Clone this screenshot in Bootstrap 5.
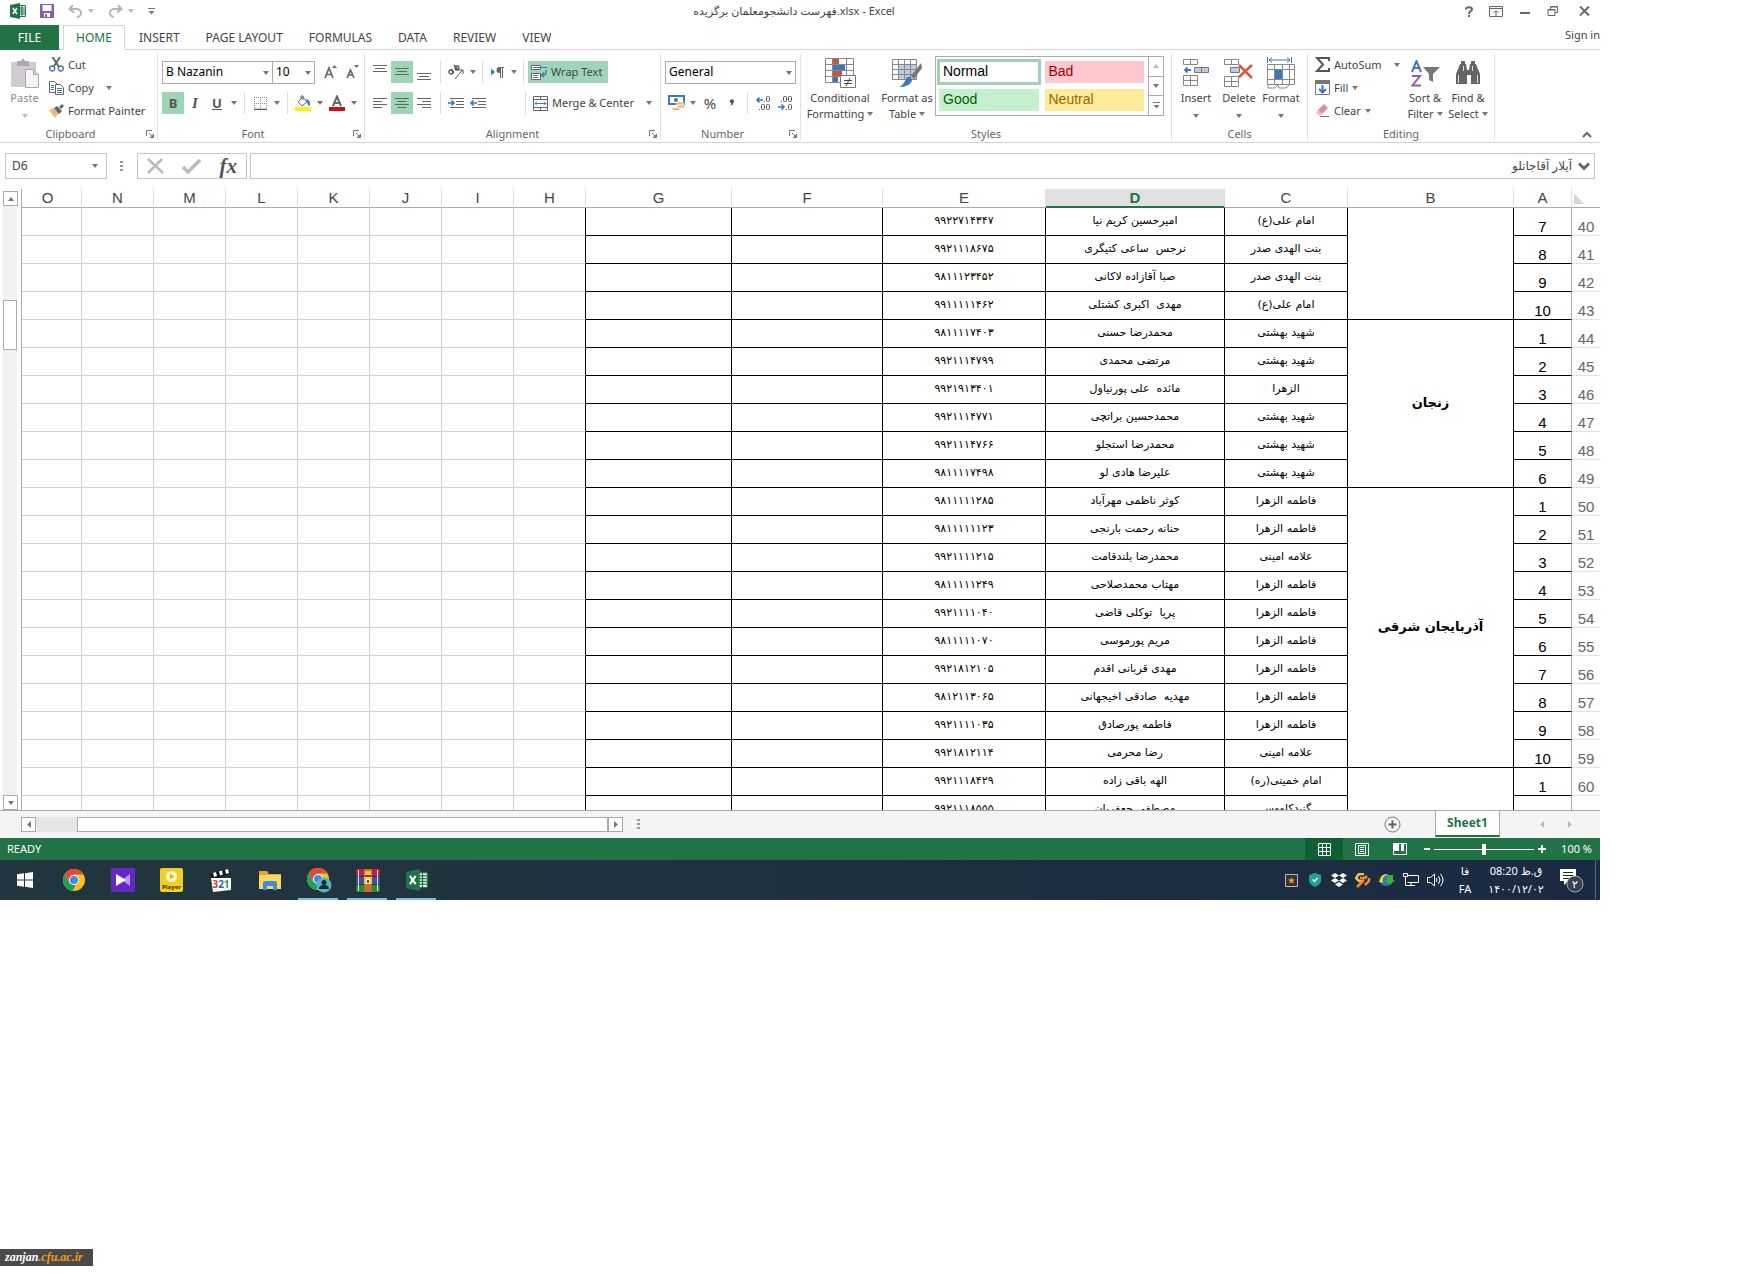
<!DOCTYPE html>
<html lang="en">
<head>
<meta charset="utf-8">
<meta name="viewport" content="width=device-width, initial-scale=1">
<title>Excel</title>
<link href="https://cdn.jsdelivr.net/npm/bootstrap@5.3.0/dist/css/bootstrap.min.css" rel="stylesheet">
<style>
:root{--ink:#444;--line:#d4d4d4;--green:#217346;--on:#9fd5b7}
body{font-family:"Noto Sans","DejaVu Sans",sans-serif;font-size:11px;line-height:16px;color:var(--ink);background:#fff;min-height:100vh}
.app{width:100%;max-width:1600px}
button,select,input{font:inherit;color:inherit;border-radius:0}
.xb{border:0;background:none;padding:0;display:inline-flex;align-items:center;justify-content:center;white-space:nowrap;flex:none}
svg{display:block;flex:none}
.ct{width:0;height:0;border:3px solid transparent;border-top:4px solid #777;border-bottom:0;flex:none}
.ct.up{border-top:0;border-bottom:4px solid #777}
.ct.pale{border-top-color:#bbb}
/* title bar and tabs */
.titlebar{height:25px;padding:0 6px 3px 10px}
.title-text{margin-right:32px}
.q5{margin-left:5px}.q14{margin-left:14px}
.tabs{height:25px;border-bottom:1px solid var(--line)}
.tabs .xb{height:25px;font-size:12px;padding:0 13px}
.tabs .file-tab{background:var(--green);color:#fff;width:59px}
.tabs .home-tab{border:1px solid var(--line);border-bottom-color:#fff;color:var(--green);width:62px;padding:0;margin:0 1px 0 4px}
.signin{padding-top:2px}
/* ribbon */
.ribbon{height:93px;border-bottom:1px solid var(--line);padding-top:4px}
.grp{height:86px;border-right:1px solid #e1e1e1;display:flex;flex-direction:column;flex:none}
.grp-body{height:74px;display:flex}
.grp-name{height:12px;line-height:12px;color:#666;position:relative;text-align:center}
.launch{position:absolute;right:3px;top:2px}
.g1{width:158px}.g2{width:207px}.g3{width:296px}.g4{width:140px}.g5{width:371px}.g6{width:136px}.g7{width:187px}
.two{display:flex;flex-direction:column;gap:9px;padding:7px 0 0 4px;flex:1}
.line{display:flex;height:22px;align-items:center}
.three .xb{height:23px;justify-content:flex-start;gap:4px;padding-bottom:2px}
.ib{width:22px;height:22px}
.cb{width:12px;height:22px}
.on{background:var(--on)}
.vr1{width:1px;height:22px;background:#ddd;flex:none}
.pick{position:relative;display:flex}
.pick select{appearance:none;border:1px solid #ababab;background:#fff;height:23px;padding:0 3px;color:#000;font-size:12px;width:100%}
.pick .ct{position:absolute;right:4px;top:10px}
.w-font{width:111px}.w-size{width:43px;margin-left:-1px}.w-num{width:131px}
.big{flex-direction:column;justify-content:flex-start;padding-top:2px;line-height:16px}
.big .pic{height:34px;display:flex;align-items:center}
.big .cap2{display:flex;align-items:center;gap:3px}
.glyph{font-size:13px;font-weight:700;line-height:22px;color:#555}
.glyph.reg{font-weight:400;font-size:15px;color:#444}
.glyph.fst-italic{font-family:"Liberation Serif",serif;font-size:15px}
.wrapb{height:22px;gap:4px;padding:0 6px 0 3px}
.s3{margin-left:3px}.s4{margin-left:4px}.s5{margin-left:5px}.s6{margin-left:36px}
.b-paste{width:49px}.b-cond{width:78px}.b-tbl{width:56px}
.b-ins{width:48px}.b-del{width:38px}.b-fmt{width:46px}
.b-ed{width:92px;padding-left:7px}.b-sort{width:50px}.b-find{width:36px}
.gallery{border:1px solid #ababab;width:229px;height:60px;margin-top:2px;display:flex}
.gal-grid{display:grid;grid-template-columns:1fr 1fr;gap:6px;padding:4px 4px 4px 3px;flex:1}
.gal-grid .xb{font:14px/20px "Liberation Sans",Arial,sans-serif;justify-content:flex-start;padding:0 0 2px 4px}
.gal-grid .sel{outline:3px solid #9fd0b9;color:#000;outline-offset:-1px}
.gal-grid .bad{background:#ffc7ce;color:#9c0006}
.gal-grid .good{background:#c6efce;color:#006100}
.gal-grid .neu{background:#ffeb9c;color:#9c6500}
.gal-scroll{width:15px;border-left:1px solid #ababab;display:flex;flex-direction:column}
.gal-scroll .xb{flex:1 1 0;flex-direction:column;gap:2px}
.gal-scroll .xb+.xb{border-top:1px solid #ababab}
/* formula bar */
.fbar{height:46px;padding:10px 5px 10px}
.fbox{border:1px solid #c6c6c6;height:26px;display:flex;align-items:center;background:#fff}
.fbox input{border:0;outline:0;background:none;min-width:0;padding:0 6px;font-size:12px}
.name-box{width:102px}.fx-box{width:110px;margin-right:3px}
.fx{font:italic bold 21px/22px "Liberation Serif",serif;color:#555}
.dots{width:3px;height:11px;background:repeating-linear-gradient(#999 0 2px,transparent 2px 4px);flex:none}
.dots.mid{margin:0 14px 0 13px}
/* grid */
.sheet-view{height:621px;overflow:hidden}
.vscroll{width:22px;padding:2px 4px 0 3px;display:flex;flex-direction:column;border-right:1px solid #ababab;flex:none}
.vtrack{background:#f1f1f1;flex:1;padding-top:94px}
.sb{width:15px;height:15px;border:1px solid #ababab;background:#fff}
.vthumb{height:50px;border:1px solid #ababab;background:#fff}
.grid-tbl{table-layout:fixed;border-collapse:separate;border-spacing:0;width:100%;font-family:"Liberation Sans",Arial,sans-serif;font-size:15px;line-height:16px;text-align:center}
.grid-tbl th{font-weight:400;padding:0;height:19px;border-right:1px solid #ddd;border-bottom:1px solid #ababab;line-height:16px;color:#444}
.grid-tbl thead th:last-child{border-right:0}
.grid-tbl thead .act{background:#e1e1e1;color:var(--green);font-weight:700;border-bottom:2px solid var(--green)}
.grid-tbl td,.grid-tbl tbody th{height:28px;padding:0;border-right:1px solid #d0d0d0;border-bottom:1px solid #d0d0d0;white-space:pre;overflow:hidden}
.grid-tbl td.k{border-color:#000;color:#000}
.grid-tbl td.h{border-right-color:#000}
.grid-tbl td.fa{font:11px/18px "DejaVu Sans",sans-serif;padding-bottom:2px}
.grid-tbl td.prov{font:bold 13px/20px "DejaVu Sans",sans-serif;padding-bottom:2px}
.grid-tbl td.idx{vertical-align:bottom;border-right-color:#ababab}
.grid-tbl tbody th{border-right:0;vertical-align:bottom;color:#666;border-color:#e1e1e1}
.c-o{width:60px}.c-n{width:72px}.c-g{width:146px}.c-f{width:151px}.c-e{width:163px}.c-d{width:179px}.c-c{width:123px}.c-b{width:166px}.c-a{width:58px}
/* sheet tabs, status bar */
.sheetbar{height:28px;background:#f4f4f4;border-top:1px solid #ababab;padding-left:21px}
.hthumb{width:531px;height:15px;border:1px solid #ababab;background:#fff;margin-left:41px}
.htrack{background:#e6e6e6}
.sheet-tab{width:65px;height:26px;margin-top:-1px;background:#fff;border:1px solid #ababab;border-top:0;border-bottom:2px solid var(--green);color:var(--green);font-weight:700;font-size:12px}
.add-sheet{margin-right:34px}
.arrows{gap:24px;margin:0 28px 0 40px}
.status{height:22px;background:var(--green);color:#fff;padding-left:7px}
.view-b{width:38px;height:22px}
.view-b.cur{background:#0f5f33}
.zoomer{appearance:none;width:100px;height:22px;background:linear-gradient(#fff,#fff) center/100% 1px no-repeat;margin:0 4px 0 3px}
.zoomer::-webkit-slider-thumb{appearance:none;width:4px;height:11px;background:#fff;border-radius:0}
.pct{width:54px;text-align:right;padding-right:8px}
/* taskbar */
.taskbar{height:40px;background:linear-gradient(90deg,#22363f,#20323f 40%,#1a2a42);color:#fff}
.task{width:49px;height:40px;position:relative}
.task.run::after{content:"";position:absolute;left:4px;right:5px;bottom:0;height:2px;background:#83b9e3}
.tray{width:24px;height:40px}
.clock{line-height:18px;text-align:center}
.w-lang{width:36px}.w-clock{width:66px}.w-note{width:46px}
.desk{height:40px;background:#55637a;margin-right:4px}
.mark-url{background:#4a4a4a;color:#fff;font:italic bold 12px/17px "Liberation Serif",serif;width:93px;padding-left:5px;margin-bottom:9px;text-decoration:none}
.mark-url span{color:#f39a1c}
</style>
</head>
<body class="d-flex flex-column">
<svg width="0" height="0" class="position-absolute" aria-hidden="true"><defs>
<symbol id="xl" viewBox="0 0 16 16"><path fill="#fff" stroke="#217346" d="M8 2.500h7.500v11H8z"/><path stroke="#217346" fill="none" d="M8 5h7M8 7h7M8 9h7M8 11h7M12 3v10"/><path fill="#217346" d="M0 2 10 0v16L0 14z"/><path stroke="#fff" stroke-width="1.500" d="m2.800 5 4.200 6M7 5l-4.200 6"/></symbol>
<symbol id="launch" viewBox="0 0 8 8"><path d="M.5 6V.5H6M3 3l3 3M7.500 4v3.500H4" fill="none" stroke="#777"/><path fill="#777" d="M7.500 4v3.500H4z"/></symbol>
<symbol id="chrome" viewBox="0 0 24 24"><circle cx="12" cy="12" r="11" fill="#fbc116"/><path fill="#dd4b3e" d="M2.500 6.500A11 11 0 0 1 21.500 6.500H12L7.500 14.500z"/><path fill="#1da05b" d="M2.500 6.500 7.500 15l6 2L10.500 22.900A11 11 0 0 1 2.500 6.500z"/><circle cx="12" cy="12" r="5" fill="#fff"/><circle cx="12" cy="12" r="4" fill="#4a86e8"/></symbol>
</defs></svg>
<main class="app">
<header class="titlebar d-flex align-items-center">
  <div class="d-flex align-items-center flex-fill">
    <svg width="16" height="16"><use href="#xl"/></svg>
    <button class="xb q14" aria-label="Save"><svg width="14" height="14" viewBox="0 0 14 14"><path fill="#8a5fa8" d="M0 0h14v14H0z"/><path fill="#fff" d="M2.500 1h9v6h-9zM4 9h6v4H4z"/><path fill="#8a5fa8" d="M5 10h2v3H5z"/></svg></button>
    <button class="xb q14" aria-label="Undo"><svg width="15" height="13" viewBox="0 0 15 13"><path fill="none" stroke="#b5b5b5" stroke-width="2" d="M5 0 1.500 4 6 7.500M2 4h7a4 4 0 0 1 0 8"/></svg></button><i class="ct pale q5"></i>
    <button class="xb q14" aria-label="Redo"><svg width="15" height="13" viewBox="0 0 15 13"><path fill="none" stroke="#b5b5b5" stroke-width="2" d="M10 0l3.500 4L9 7.500M13 4H6a4 4 0 0 0 0 8"/></svg></button><i class="ct pale q5"></i>
    <button class="xb q14" aria-label="Customize"><svg width="7" height="7" viewBox="0 0 7 7"><path fill="#777" d="M0 0h7v1H0zM.5 3h6L3.500 6.500z"/></svg></button>
  </div>
  <div class="title-text" dir="ltr"><bdi>فهرست دانشجومعلمان برگزیده</bdi>.xlsx - Excel</div>
  <div class="d-flex align-items-center justify-content-end flex-fill gap-3">
    <button class="xb" aria-label="Help"><svg width="8" height="11" viewBox="0 0 8 11"><path fill="none" stroke="#666" stroke-width="2" d="M1 3.500C1 .5 7 .5 7 3.500 7 5 4 5 4 8M4 9v2"/></svg></button>
    <button class="xb" aria-label="Ribbon display"><svg width="14" height="11" viewBox="0 0 14 11"><path fill="none" stroke="#666" d="M.5.5h13v10H.5zM.5 2.500h13M7 10V5M4.500 7 7 4.500 9.500 7"/></svg></button>
    <button class="xb" aria-label="Minimize"><svg width="12" height="10" viewBox="0 0 12 10"><path fill="#666" d="M1 6h10v2H1z"/></svg></button>
    <button class="xb" aria-label="Restore"><svg width="12" height="10" viewBox="0 0 12 10"><path fill="none" stroke="#666" d="M3.500 3V.5h7v6H8M1 3.500h7v6H1zM1 4h7M3.500 1h7"/></svg></button>
    <button class="xb mx-1" aria-label="Close"><svg width="11" height="10" viewBox="0 0 11 10"><path stroke="#666" stroke-width="2" d="m1 .5 9 9M10 .5l-9 9"/></svg></button>
  </div>
</header>
<nav class="tabs d-flex">
  <button class="xb file-tab">FILE</button><button class="xb home-tab">HOME</button><button class="xb">INSERT</button><button class="xb">PAGE LAYOUT</button><button class="xb">FORMULAS</button><button class="xb">DATA</button><button class="xb">REVIEW</button><button class="xb">VIEW</button>
  <a href="#" class="signin ms-auto text-reset text-decoration-none">Sign in</a>
</nav>
<section class="ribbon d-flex">
  <div class="grp g1"><div class="grp-body">
    <button class="xb big b-paste text-black-50"><span class="pic"><svg width="30" height="31" viewBox="0 0 30 31"><path fill="#cfcbd0" d="M1 4h25v25H1z"/><path fill="#aaa" d="M7 3h4q2-5 4 0h4v5H7z"/><path fill="#f6f3f7" stroke="#aaa" d="M15.500 11.500h8l5 5v13h-13zM23.500 11.500v5h5"/></svg></span><span>Paste</span><i class="ct pale mt-2"></i></button>
    <div class="three d-flex flex-column">
      <button class="xb"><svg width="15" height="15" viewBox="0 0 15 15"><path stroke="#666" stroke-width="2" fill="none" d="M3.500 0 10 10M11 0 4.500 10"/><g fill="none" stroke="#3f78b5" stroke-width="1.300"><circle cx="3.200" cy="11.500" r="2.500"/><circle cx="11.800" cy="11.500" r="2.500"/></g></svg>Cut</button>
      <button class="xb"><svg width="15" height="14" viewBox="0 0 15 14"><g fill="#fff" stroke="#666"><path d="M.5.5h5l3 3v8h-8z"/><path d="M6.500 3.500h5l3 3v7h-8z"/></g><path stroke="#3f78b5" d="M2 4.500h3M2 6.500h3M2 8.500h3M8 7.500h5M8 9.500h5M8 11.500h5"/></svg>Copy<i class="ct ms-2"></i></button>
      <button class="xb"><svg width="15" height="14" viewBox="0 0 15 14"><path fill="#e3bd7b" d="M0 6 5 4l5 5-4 5z"/><path fill="#666" d="m5 4 3-2 5 5-3 3zM10 3l3-3 2 2-3 3z"/></svg>Format Painter</button>
    </div></div>
    <div class="grp-name pe-3">Clipboard<button class="xb launch" aria-label="Clipboard settings"><svg width="8" height="8"><use href="#launch"/></svg></button></div></div>
  <div class="grp g2"><div class="grp-body two">
    <div class="line"><label class="pick w-font"><select aria-label="Font"><option>B Nazanin</option></select><i class="ct"></i></label><label class="pick w-size"><select aria-label="Font size"><option>10</option></select><i class="ct"></i></label>
      <button class="xb ib ms-1" aria-label="Increase font"><svg width="13" height="14" viewBox="0 0 13 14"><path fill="none" stroke="#666" stroke-width="1.700" d="m1 13 4-10 4 10M2.500 9.500h5"/><path fill="#3f78b5" d="M8 3h5l-2.500-3z"/></svg></button><button class="xb ib" aria-label="Decrease font"><svg width="13" height="14" viewBox="0 0 13 14"><path fill="none" stroke="#666" stroke-width="1.700" d="m1 13 3.500-8L8 13M2.500 10h4"/><path fill="#3f78b5" d="M8 0h5l-2.500 3z"/></svg></button></div>
    <div class="line"><button class="xb ib on glyph" aria-label="Bold">B</button><button class="xb ib glyph fst-italic" aria-label="Italic">I</button><button class="xb ib glyph text-decoration-underline" aria-label="Underline">U</button><button class="xb cb" aria-label="Underline options"><i class="ct"></i></button><i class="vr1 ms-1"></i>
      <button class="xb ib ms-1" aria-label="Borders"><svg width="13" height="13" viewBox="0 0 13 13"><path fill="none" stroke="#888" stroke-dasharray="1 1" d="M.5 0v13M6.500 0v13M12.500 0v13M0 .5h13M0 6.500h13"/><path stroke="#555" stroke-width="1.500" d="M0 12.500h13"/></svg></button><button class="xb cb" aria-label="Border options"><i class="ct"></i></button><i class="vr1 ms-1"></i>
      <button class="xb ib ms-1" aria-label="Fill colour"><svg width="16" height="16" viewBox="0 0 16 16"><path fill="#fff" stroke="#666" d="m3 7 5-5 4 5-5 4zM6 4V1h2v4"/><path fill="#3f78b5" d="M11 4q5 1 4 7l-2-1z"/><path fill="#ffee12" d="M0 12h16v4H0z"/></svg></button><button class="xb cb" aria-label="Fill options"><i class="ct"></i></button>
      <button class="xb ib" aria-label="Font colour"><svg width="16" height="16" viewBox="0 0 16 16"><path fill="none" stroke="#666" stroke-width="2" d="M4 11 8 1.500 12 11M5.500 8h5"/><path fill="#cf1111" d="M0 12h16v4H0z"/></svg></button><button class="xb cb" aria-label="Font colour options"><i class="ct"></i></button></div>
    </div><div class="grp-name pe-3">Font<button class="xb launch" aria-label="Font settings"><svg width="8" height="8"><use href="#launch"/></svg></button></div></div>
  <div class="grp g3"><div class="grp-body two">
    <div class="line"><button class="xb ib" aria-label="Top"><svg width="14" height="16" viewBox="0 0 14 16"><path stroke="#666" d="M0 1.500h14M2 4.500h10M0 7.500h14"/></svg></button><button class="xb ib on" aria-label="Middle"><svg width="14" height="16" viewBox="0 0 14 16"><path stroke="#666" d="M0 4.500h14M2 7.500h10M0 10.500h14"/></svg></button><button class="xb ib" aria-label="Bottom"><svg width="14" height="16" viewBox="0 0 14 16"><path stroke="#666" d="M0 9.500h14M2 12.500h10M0 15.500h14"/></svg></button><i class="vr1 s5"></i>
      <button class="xb ib ms-1" aria-label="Orientation"><svg width="16" height="16" viewBox="0 0 16 16"><path fill="none" stroke="#555" d="M7 15 14.500 6M11 6h4v4"/><g fill="none" stroke="#555" stroke-width="1.300"><circle cx="3" cy="8" r="2"/><path d="m3 5 3 4M6 1l4 5"/><circle cx="9" cy="4" r="2"/></g></svg></button><button class="xb cb" aria-label="Orientation options"><i class="ct"></i></button><i class="vr1 s3"></i>
      <button class="xb ib s3" aria-label="Direction"><svg width="13" height="11" viewBox="0 0 13 11"><path fill="#3f78b5" d="M0 1.500v7L4 5z"/><path fill="#666" d="M8 0h5v1h-1v10h-1V1h-1v10H9V6Q5 6 5.500 3 6 0 8 0z"/></svg></button><button class="xb cb" aria-label="Direction options"><i class="ct"></i></button><i class="vr1 s3"></i>
      <button class="xb on wrapb s4"><svg width="16" height="16" viewBox="0 0 16 16"><path fill="#fff" stroke="#666" d="M.5 1.500h9v4h-9zM.5 9.500h9v6h-9z"/><path stroke="#3f78b5" d="M2 3.500h14M2 11.500h5M2 13.500h5"/><path fill="none" stroke="#3f78b5" stroke-width="1.500" d="M15 6v3q0 2-4 2M13 8.500 10.500 11l2.500 2"/></svg>Wrap Text</button></div>
    <div class="line"><button class="xb ib" aria-label="Left"><svg width="14" height="11" viewBox="0 0 14 11"><path stroke="#666" d="M0 .5h14M0 3.500h9M0 6.500h14M0 9.500h9"/></svg></button><button class="xb ib on" aria-label="Centre"><svg width="14" height="11" viewBox="0 0 14 11"><path stroke="#666" d="M0 .5h14M2.500 3.500h9M0 6.500h14M2.500 9.500h9"/></svg></button><button class="xb ib" aria-label="Right"><svg width="14" height="11" viewBox="0 0 14 11"><path stroke="#666" d="M0 .5h14M5 3.500h9M0 6.500h14M5 9.500h9"/></svg></button><i class="vr1 s5"></i>
      <button class="xb ib ms-1" aria-label="Decrease indent"><svg width="16" height="11" viewBox="0 0 16 11"><path stroke="#666" d="M2 .5h14M8 3.500h8M8 6.500h8M2 9.500h14"/><path stroke="#3f78b5" stroke-width="1.600" fill="none" d="M0 5h6M3.500 2.500 6 5 3.500 7.500"/></svg></button><button class="xb ib" aria-label="Increase indent"><svg width="16" height="11" viewBox="0 0 16 11"><path stroke="#666" d="M2 .5h14M8 3.500h8M8 6.500h8M2 9.500h14"/><path stroke="#3f78b5" stroke-width="1.600" fill="none" d="M7 5H1M3.500 2.500 1 5l2.500 2.500"/></svg></button><i class="vr1 s6"></i>
      <button class="xb wrapb s4"><svg width="15" height="15" viewBox="0 0 15 15"><path fill="#fff" stroke="#666" d="M.5.5h14v14H.5zM.5 3.500h14M.5 11.500h14M7.500.5v3M7.500 11.500v3"/><path stroke="#3f78b5" fill="none" d="M2 7.500h11M4 5.500l-2 2 2 2M11 5.500l2 2-2 2"/></svg>Merge &amp; Center<i class="ct ms-2"></i></button></div>
    </div><div class="grp-name">Alignment<button class="xb launch" aria-label="Alignment settings"><svg width="8" height="8"><use href="#launch"/></svg></button></div></div>
  <div class="grp g4"><div class="grp-body two">
    <div class="line"><label class="pick w-num"><select aria-label="Number format"><option>General</option></select><i class="ct"></i></label></div>
    <div class="line"><button class="xb ib" aria-label="Accounting"><svg width="17" height="16" viewBox="0 0 17 16"><path fill="#fff" stroke="#3f78b5" stroke-width="2" d="M1 1h15v8H1z"/><circle cx="8" cy="5" r="2" fill="#3f78b5"/><g fill="#e6c083" stroke="#fff" stroke-width=".6"><rect x="8" y="7" width="8" height="3" rx="1.500"/><rect x="9" y="10" width="8" height="3" rx="1.500"/><rect x="4" y="12.500" width="8" height="3" rx="1.500"/></g></svg></button><button class="xb cb" aria-label="Accounting options"><i class="ct"></i></button>
      <button class="xb ib glyph reg" aria-label="Percent">%</button><button class="xb ib" aria-label="Comma"><svg width="6" height="8" viewBox="0 0 6 8"><path fill="#555" d="M1 1q4-2 4 2-1 3-4 4 2-2 1-3-2-1-1-3z"/></svg></button><i class="vr1 ms-1"></i>
      <button class="xb ib ms-1" aria-label="Increase decimal"><svg width="15" height="14" viewBox="0 0 15 14"><path stroke="#3f78b5" stroke-width="1.600" fill="none" d="M7 4H1M3.500 1.500 1 4l2.500 2.500"/><g fill="none" stroke="#555"><rect x="10.500" y=".5" width="3" height="5" rx="1"/><rect x="5.500" y="8.500" width="3" height="5" rx="1"/><rect x="10.500" y="8.500" width="3" height="5" rx="1"/></g><path fill="#555" d="M8 5h1v1H8zM3 13h1v1H3z"/></svg></button><button class="xb ib" aria-label="Decrease decimal"><svg width="15" height="14" viewBox="0 0 15 14"><path stroke="#3f78b5" stroke-width="1.600" fill="none" d="M0 11h6M3.500 8.500 6 11l-2.500 2.500"/><g fill="none" stroke="#555"><rect x="10.500" y=".5" width="3" height="5" rx="1"/><rect x="5.500" y=".5" width="3" height="5" rx="1"/><rect x="10.500" y="8.500" width="3" height="5" rx="1"/></g><path fill="#555" d="M3 5h1v1H3zM8 13h1v1H8z"/></svg></button></div>
    </div><div class="grp-name pe-3">Number<button class="xb launch" aria-label="Number settings"><svg width="8" height="8"><use href="#launch"/></svg></button></div></div>
  <div class="grp g5"><div class="grp-body">
    <button class="xb big b-cond"><span class="pic"><svg width="31" height="31" viewBox="0 0 31 31"><path fill="#fff" stroke="#888" d="M.5.5h28v24H.5zM.5 6.500h28M.5 12.500h28M.5 18.500h28M7.500.5v24M21.500.5v24"/><path fill="#c7583f" d="M8 1h6v5H8zM8 13h9v5H8z"/><path fill="#3f78b5" d="M8 7h12v5H8zM8 19h5v5H8z"/><path fill="#fff" stroke="#777" d="M15.500 17.500h15v12h-15z"/><path stroke="#444" d="M19 22.500h8M19 25.500h8M25 20l-4 8"/></svg></span><span>Conditional</span><span class="cap2">Formatting<i class="ct"></i></span></button>
    <button class="xb big b-tbl"><span class="pic"><svg width="30" height="29" viewBox="0 0 30 29"><path fill="#bccbdd" d="M6 6h19v15H6z"/><path fill="none" stroke="#888" d="M.5.5h24v20H.5zM.5 5.500h24M.5 10.500h24M.5 15.500h24M6.500.5v20M12.500.5v20M18.500.5v20"/><path fill="#777" d="m29 4 1 5-8 11-3-3z"/><path fill="#3f78b5" d="M15 18q5-1 5 4-3 6-13 6 4-1 8-10z"/></svg></span><span>Format as</span><span class="cap2">Table<i class="ct"></i></span></button>
    <div class="gallery"><div class="gal-grid"><button class="xb sel">Normal</button><button class="xb bad">Bad</button><button class="xb good">Good</button><button class="xb neu">Neutral</button></div><div class="gal-scroll"><button class="xb" aria-label="Up"><i class="ct up opacity-50"></i></button><button class="xb" aria-label="Down"><i class="ct"></i></button><button class="xb" aria-label="More"><svg width="7" height="7" viewBox="0 0 7 7"><path fill="#777" d="M0 0h7v1H0zM.5 3h6L3.500 6.500z"/></svg></button></div></div>
    </div><div class="grp-name">Styles</div></div>
  <div class="grp g6"><div class="grp-body">
    <button class="xb big b-ins"><span class="pic"><svg width="27" height="28" viewBox="0 0 27 28"><path fill="#fff" stroke="#888" d="M.5.5h14v5H.5zM7.500.5v5M.5 16.500h14v10H.5zM7.500 16.500v10M.5 21.500h14"/><path fill="#bccbdd" stroke="#777" d="M11.500 8.500h14v5h-14zM18.500 8.500v5"/><path fill="none" stroke="#3f78b5" stroke-width="1.800" d="M8 11H2M4.500 8.500 2 11l2.500 2.500"/></svg></span><span>Insert</span><i class="ct mt-2"></i></button>
    <button class="xb big b-del"><span class="pic"><svg width="30" height="28" viewBox="0 0 30 28"><path fill="#fff" stroke="#888" d="M.5.500h14v5H.5zM7.500.5v5M.5 17.500h14v10H.5zM7.500 17.500v10M.5 22.500h14"/><path fill="#bccbdd" stroke="#777" d="M6.500 8.500h9v5h-9z"/><path stroke="#d0593f" stroke-width="2.500" d="m15 6 13 13M28 6 15 18"/></svg></span><span>Delete</span><i class="ct mt-2"></i></button>
    <button class="xb big b-fmt"><span class="pic"><svg width="29" height="32" viewBox="0 0 29 32"><path fill="none" stroke="#3f78b5" d="M.5 0v6M24.500 0v6M2 3h21M5 .5 2 3l3 2.500M20 .5 23 3l-3 2.500"/><path fill="none" stroke="#888" d="M.5 7.500h27v20H.5zM.5 12.500h27M.5 22.500h27M7.500 7.500v20M15.500 7.500v20M22.500 7.500v20M1 28v3h7l3-3 1 3h7l3-3"/><path fill="#3f78b5" d="M8 13h7v9H8z"/></svg></span><span>Format</span><i class="ct mt-2"></i></button>
    </div><div class="grp-name">Cells</div></div>
  <div class="grp g7"><div class="grp-body">
    <div class="three d-flex flex-column b-ed">
      <button class="xb"><svg width="15" height="15" viewBox="0 0 15 15"><path fill="none" stroke="#555" stroke-width="2" d="M14 4V1H2l6 6.500L2 14h12v-3"/></svg>AutoSum<i class="ct ms-2"></i></button>
      <button class="xb"><svg width="15" height="15" viewBox="0 0 15 15"><path fill="#fff" stroke="#777" d="M.5.5h14v14H.5z"/><path fill="#777" d="M0 0h15v4H0z"/><path fill="none" stroke="#3f78b5" stroke-width="2" d="M7.500 5v7M4 9l3.500 3.500L11 9"/></svg>Fill<i class="ct"></i></button>
      <button class="xb"><svg width="15" height="13" viewBox="0 0 15 13"><path fill="#e08a9c" d="m3 6 6-6 4 4-6 6z"/><path fill="#eeb7c2" d="m3 6 4 4-2 2-4-3z"/><path stroke="#777" d="M5 12.500h9"/></svg>Clear<i class="ct"></i></button>
    </div>
    <button class="xb big b-sort"><span class="pic"><svg width="29" height="27" viewBox="0 0 29 27"><path fill="none" stroke="#3f78b5" stroke-width="2" d="m1 12 4.500-11L10 12M3 8h6"/><path fill="none" stroke="#8d60a9" stroke-width="2" d="M1 16h8L1.500 25.500H10"/><path fill="#777" d="M12 7h17l-7 7v8l-4-2v-6z"/></svg></span><span>Sort &amp;</span><span class="cap2">Filter<i class="ct"></i></span></button>
    <button class="xb big b-find"><span class="pic"><svg width="26" height="24" viewBox="0 0 26 24"><path fill="#666" d="M6 0h4v3h1l1 6h2l1-6h1V0h4v3h1l4 10v10h-9v-9h-4v9H1V13L5 3h1z"/><path stroke="#ddd" d="M3.500 14v8M22.500 14v8M8.500 5v5M17.500 5v5"/></svg></span><span>Find &amp;</span><span class="cap2">Select<i class="ct"></i></span></button>
    </div><div class="grp-name">Editing</div></div>
  <button class="xb ms-auto align-self-end me-2 mb-1" aria-label="Collapse ribbon"><svg width="10" height="7" viewBox="0 0 10 7"><path fill="none" stroke="#666" stroke-width="2" d="m1 6 4-4 4 4"/></svg></button>
</section>
<section class="fbar d-flex align-items-center">
  <div class="fbox name-box"><input aria-label="Name box" value="D6" class="w-100"><i class="ct me-2"></i></div>
  <i class="dots mid"></i>
  <div class="fbox fx-box"><button class="xb flex-fill" aria-label="Cancel"><svg width="17" height="16" viewBox="0 0 17 16"><path stroke="#bbb" stroke-width="2.500" d="m1 1 15 14M15 1 1 15"/></svg></button><button class="xb flex-fill" aria-label="Enter"><svg width="19" height="15" viewBox="0 0 19 15"><path fill="none" stroke="#bbb" stroke-width="3.500" d="m1 8 5 5L18 1"/></svg></button><button class="xb flex-fill fx">fx</button></div>
  <div class="fbox flex-fill"><input aria-label="Formula" dir="rtl" value="آیلار آقاجانلو" class="flex-fill"><svg class="me-1" width="12" height="9" viewBox="0 0 12 9"><path fill="none" stroke="#666" stroke-width="3" d="m1 1.500 5 5 5-5"/></svg></div>
</section>
<section class="sheet-view d-flex">
  <div class="vscroll"><button class="xb sb" aria-label="Scroll up"><i class="ct up"></i></button><div class="vtrack"><div class="vthumb"></div></div><button class="xb sb" aria-label="Scroll down"><i class="ct"></i></button></div>
  <div class="flex-fill">
  <table class="grid-tbl">
    <colgroup><col class="c-o"><col class="c-n"><col class="c-n"><col class="c-n"><col class="c-n"><col class="c-n"><col class="c-n"><col class="c-n"><col class="c-g"><col class="c-f"><col class="c-e"><col class="c-d"><col class="c-c"><col class="c-b"><col class="c-a"><col></colgroup>
    <thead><tr><th class="pe-2">O</th><th>N</th><th>M</th><th>L</th><th>K</th><th>J</th><th>I</th><th>H</th><th>G</th><th>F</th><th>E</th><th class="act">D</th><th>C</th><th>B</th><th>A</th><th><svg width="12" height="11" viewBox="0 0 12 11"><path fill="#d6d6d6" d="M2 0v11h10z"/></svg></th></tr></thead>
    <tbody id="rows"></tbody>
  </table></div>
</section>
<section class="sheetbar d-flex align-items-center">
  <button class="xb sb" aria-label="Scroll left"><svg width="4" height="7" viewBox="0 0 4 7"><path fill="#777" d="M4 0v7L0 3.500z"/></svg></button><div class="htrack"><div class="hthumb"></div></div><button class="xb sb" aria-label="Scroll right"><svg width="4" height="7" viewBox="0 0 4 7"><path fill="#777" d="M0 0v7l4-3.500z"/></svg></button><i class="dots q14"></i>
  <button class="xb ms-auto add-sheet" aria-label="New sheet"><svg width="17" height="17" viewBox="0 0 17 17"><circle cx="8.500" cy="8.500" r="7.500" fill="none" stroke="#777"/><path stroke="#666" stroke-width="2" d="M8.500 4.500v8M4.500 8.500h8"/></svg></button>
  <button class="xb sheet-tab">Sheet1</button>
  <div class="d-flex arrows"><svg width="4" height="7" viewBox="0 0 4 7"><path fill="#bbb" d="M4 0v7L0 3.500z"/></svg><svg width="4" height="7" viewBox="0 0 4 7"><path fill="#bbb" d="M0 0v7l4-3.500z"/></svg></div>
</section>
<section class="status d-flex align-items-center"><span>READY</span>
  <button class="xb view-b cur ms-auto" aria-label="Normal view"><svg width="13" height="13" viewBox="0 0 13 13"><path fill="none" stroke="#fff" d="M.5.5h12v12H.5zM.5 4.500h12M.5 8.500h12M4.500.5v12M8.500.5v12"/></svg></button>
  <button class="xb view-b" aria-label="Page layout view"><svg width="14" height="13" viewBox="0 0 14 13"><path fill="none" stroke="#fff" d="M.5.5h13v12H.5zM3.500 2.500h7v8h-7zM5 4.500h4M5 6.500h4M5 8.500h4"/></svg></button>
  <button class="xb view-b" aria-label="Page break view"><svg width="14" height="12" viewBox="0 0 14 12"><path fill="none" stroke="#fff" d="M.5.5h13v11H.5z"/><path fill="#fff" d="M1 1h5v7H1zM8 1h3v7H8z"/></svg></button>
  <button class="xb ms-1" aria-label="Zoom out"><svg width="8" height="8" viewBox="0 0 8 8"><path fill="#fff" d="M1 3h6v2H1z"/></svg></button><input class="zoomer" type="range" aria-label="Zoom"><button class="xb" aria-label="Zoom in"><svg width="8" height="8" viewBox="0 0 8 8"><path fill="#fff" d="M0 3h8v2H0zM3 0h2v8H3z"/></svg></button><span class="pct">100 %</span>
</section>
<footer class="taskbar d-flex align-items-center">
  <button class="xb task" aria-label="Start"><svg width="16" height="16" viewBox="0 0 16 16"><path fill="#fff" d="M0 2.300 7 1.300v6.200H0zM8 1.200 16 0v7.500H8zM0 8.500h7v6.200l-7-1zM8 8.500h8V16l-8-1.200z"/></svg></button>
  <button class="xb task" aria-label="Chrome"><svg width="24" height="24"><use href="#chrome"/></svg></button>
  <button class="xb task" aria-label="Media"><svg width="24" height="24" viewBox="0 0 24 24"><path fill="#6527c8" d="M0 0h24v24H0z"/><path fill="#b99ae8" d="M19 6v12l-8-6z"/><path fill="#fff" d="M5 6v12l10-6z"/></svg></button>
  <button class="xb task" aria-label="Player"><svg width="23" height="24" viewBox="0 0 23 24"><rect width="23" height="24" rx="2" fill="#f0cf22"/><circle cx="11.500" cy="8.500" r="5.500" fill="#fff8cf"/><path fill="#e0b800" d="M10 5.500v6l4.500-3z"/><text x="11.500" y="21" font-size="6" font-weight="700" text-anchor="middle" fill="#3a3000">Player</text></svg></button>
  <button class="xb task" aria-label="Media Player Classic"><svg width="22" height="23" viewBox="0 0 22 23"><path fill="#111" d="m0 5 19-5 1 5L2 10z"/><path fill="#fff" d="m3 4 3-1 1 4-3 1zM9 2.500l3-1 1 4-3 1zM15 1l3-1 1 4-3 1zM1 9h20v12L3 23z"/><text x="11" y="19" font-size="10" font-weight="700" text-anchor="middle"><tspan fill="#d33b23">3</tspan><tspan fill="#2a62c5">2</tspan><tspan fill="#2a9a3c">1</tspan></text></svg></button>
  <button class="xb task" aria-label="Explorer"><svg width="22" height="19" viewBox="0 0 22 19"><path fill="#e3a52f" d="M0 0h8l2 3h12v6H0z"/><path fill="#fbd667" d="M0 4h22v14H0z"/><path fill="#3c8fd0" d="M4 19v-7q0-2 2-2h10q2 0 2 2v7h-4v-4H8v4z"/></svg></button>
  <button class="xb task run" aria-label="Chrome window"><svg width="26" height="26" viewBox="0 0 26 26"><svg width="24" height="24"><use href="#chrome"/></svg><circle cx="18" cy="18" r="7.500" fill="#55b5bd"/><circle cx="18" cy="15.500" r="2.500" fill="#0c2a33"/><path fill="#0c2a33" d="M13 22q0-4 5-4t5 4z"/></svg></button>
  <button class="xb task run" aria-label="WinRAR"><svg width="24" height="23" viewBox="0 0 24 23"><rect width="24" height="7" rx="1" fill="#b5253f"/><rect y="8" width="24" height="7" rx="1" fill="#474ea0"/><rect y="16" width="24" height="7" rx="1" fill="#2b8a39"/><path fill="#ddd" d="M2 1h1v21H2zM21 1h1v21h-1z"/><path fill="#c4702d" d="M8 0h8v23H8z"/><path fill="#f3c64f" d="M9 2h6v4H9zM8 8h8v7H8z"/><path fill="#fff" d="M10 10h4v5h-4z"/><path fill="#8a3a12" d="M9 6h6v2H9zM11 11h2v3h-2z"/></svg></button>
  <button class="xb task run" aria-label="Excel window"><svg width="22" height="22"><use href="#xl"/></svg></button>
  <div class="ms-auto d-flex align-items-center">
    <button class="xb tray" aria-label="Pot player"><svg width="13" height="13" viewBox="0 0 13 13"><path fill="#333" stroke="#bbb" d="M.5.5h12v12H.5z"/><path fill="#f2a52c" d="m6.500 3 1 2.500H10L8 7l1 3-2.500-2L4 10l1-3-2-1.500h2.500z"/></svg></button>
    <button class="xb tray" aria-label="Antivirus"><svg width="12" height="14" viewBox="0 0 12 14"><path fill="#1fa58c" d="m6 0 6 2v6q0 3-6 6-6-3-6-6V2z"/><path fill="none" stroke="#fff" stroke-width="1.500" d="m3.500 6.500 2 2 3-3.500"/></svg></button>
    <button class="xb tray" aria-label="Dropbox"><svg width="16" height="14" viewBox="0 0 16 14"><path fill="#fff" d="m4 0 4 2.500L4 5 0 2.500zM12 0l4 2.500L12 5 8 2.500zM4 5l4 2.500L4 10 0 7.500zM12 5l4 2.500-4 2.500-4-2.500zM8 9l4 2.500L8 14l-4-2.500z"/></svg></button>
    <button class="xb tray" aria-label="Tools"><svg width="16" height="15" viewBox="0 0 16 15"><path fill="none" stroke="#f5c255" stroke-width="2.500" d="M9 1 4 1 1 5l3 3h3"/><path fill="none" stroke="#f08b2f" stroke-width="2.500" d="M5 5h5l2-2M2 14l7-7M10 12l4-4V5"/></svg></button>
    <button class="xb tray" aria-label="Download manager"><svg width="16" height="14" viewBox="0 0 16 14"><circle cx="7" cy="7" r="6" fill="#2f78b8"/><path fill="#f3d43b" d="M0 9Q2 0 9 1 2 4 4 10z"/><path fill="#3fae3a" d="M8 2h6v5h2l-5 5-5-5h2z"/></svg></button>
    <button class="xb tray" aria-label="Network"><svg width="16" height="14" viewBox="0 0 16 14"><path fill="none" stroke="#fff" d="M5 2.500h10.500v7H4.500M8 9.500v3M5 12.500h7M.5.5h4v3h-4zM2.500 4v8.500H5"/></svg></button>
    <button class="xb tray" aria-label="Volume"><svg width="17" height="14" viewBox="0 0 17 14"><path fill="none" stroke="#fff" d="M.5 4.500h3l4-3.500v12l-4-3.500h-3zM9.500 5q1 2 0 4M11.500 3q3 4 0 8M13.500 1q5 6 0 12"/></svg></button>
    <div class="clock w-lang">فا<br>FA</div>
    <div class="clock w-clock"><span dir="rtl">ق.ظ 08:20</span><br><span dir="ltr">۱۴۰۰/۱۲/۰۲</span></div>
    <button class="xb w-note" aria-label="Notifications"><svg width="26" height="25" viewBox="0 0 26 25"><path fill="#fff" d="M1 1h16v12H9l-4 4v-4H1z"/><path stroke="#1a2a42" d="M4 4.500h10M4 7.500h10M4 10.500h6"/><circle cx="16" cy="16" r="8" fill="#36414f" stroke="#aaa"/><text x="16" y="20" font-size="11" text-anchor="middle" fill="#fff">۲</text></svg></button>
    <i class="vr1 desk"></i>
  </div>
</footer>
</main>
<a class="mark-url mt-auto" href="#">zanjan<span>.cfu.ac.ir</span></a>
<script>
const rows=[
["امام علی(ع)","امیرحسین کریم نیا","۹۹۲۲۷۱۴۳۴۷",7],
["بنت الهدی صدر","نرجس  ساعی کتیگری","۹۹۲۱۱۱۸۶۷۵",8],
["بنت الهدی صدر","صبا آقازاده لاکانی","۹۸۱۱۱۲۳۴۵۲",9],
["امام علی(ع)","مهدی  اکبری کشتلی","۹۹۱۱۱۱۱۴۶۲",10],
["شهید بهشتی","محمدرضا حسنی","۹۸۱۱۱۱۷۴۰۳",1],
["شهید بهشتی","مرتضی محمدی","۹۹۲۱۱۱۴۷۹۹",2],
["الزهرا","مائده  علی پورنیاول","۹۹۲۱۹۱۳۴۰۱",3],
["شهید بهشتی","محمدحسین براتچی","۹۹۲۱۱۱۴۷۷۱",4],
["شهید بهشتی","محمدرضا استجلو","۹۹۲۱۱۱۴۷۶۶",5],
["شهید بهشتی","علیرضا هادی لو","۹۸۱۱۱۱۷۴۹۸",6],
["فاطمه الزهرا","کوثر ناظمی مهرآباد","۹۸۱۱۱۱۱۲۸۵",1],
["فاطمه الزهرا","حنانه رحمت بارنجی","۹۸۱۱۱۱۱۱۲۳",2],
["علامه امینی","محمدرضا بلندقامت","۹۹۲۱۱۱۱۲۱۵",3],
["فاطمه الزهرا","مهتاب محمدصلاحی","۹۸۱۱۱۱۱۲۴۹",4],
["فاطمه الزهرا","پریا  توکلی قاضی","۹۹۲۱۱۱۱۰۴۰",5],
["فاطمه الزهرا","مریم پورموسی","۹۸۱۱۱۱۱۰۷۰",6],
["فاطمه الزهرا","مهدی قربانی اقدم","۹۹۲۱۸۱۲۱۰۵",7],
["فاطمه الزهرا","مهدیه  صادقی اخیجهانی","۹۸۱۲۱۱۳۰۶۵",8],
["فاطمه الزهرا","فاطمه پورصادق","۹۹۲۱۱۱۱۰۳۵",9],
["علامه امینی","رضا محرمی","۹۹۲۱۸۱۲۱۱۴",10],
["امام خمینی(ره)","الهه باقی زاده","۹۹۲۱۱۱۸۴۲۹",1],
["گنبدکاووس","مصطفی جعفریان","۹۹۲۱۱۱۸۵۵۵",2]];
const provinces={0:["",4],4:["زنجان",6],10:["آذربایجان شرقی",10],20:["",2]};
document.getElementById("rows").innerHTML=rows.map(([c,d,e,a],i)=>{
  const p=provinces[i];
  return "<tr>"+"<td></td>".repeat(7)+'<td class="h"></td><td class="k"></td><td class="k"></td>'+
  `<td class="k fa">${e}</td><td class="k fa" dir="rtl">${d}</td><td class="k fa" dir="rtl">${c}</td>`+
  (p?`<td class="k prov" dir="rtl" rowspan="${p[1]}">${p[0]}</td>`:"")+
  `<td class="k idx">${a}</td><th scope="row">${40+i}</th></tr>`;
}).join("");
</script>
<script src="https://cdn.jsdelivr.net/npm/bootstrap@5.3.0/dist/js/bootstrap.bundle.min.js"></script>
</body>
</html>
